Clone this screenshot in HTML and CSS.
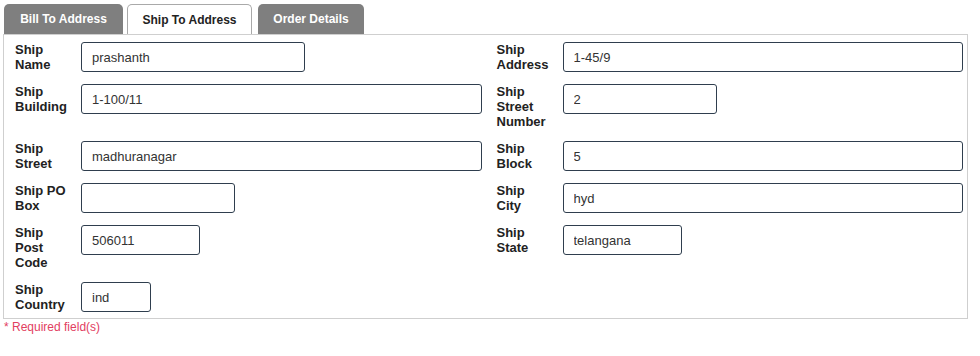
FILE: index.html
```html
<!DOCTYPE html>
<html>
<head>
<meta charset="utf-8">
<link rel="stylesheet" href="styles.css">
</head>
<body>
<div class="wrap">
  <div class="tabs">
    <div class="tab tab-bill">Bill To Address</div>
    <div class="tab tab-ship active">Ship To Address</div>
    <div class="tab tab-order">Order Details</div>
  </div>
  <div class="panel">
    <div class="grid">
      <div class="field"><label class="lbl">Ship Name</label><input class="inp w224" value="prashanth"></div>
      <div class="field"><label class="lbl">Ship Address</label><input class="inp full" value="1-45/9"></div>

      <div class="field"><label class="lbl">Ship Building</label><input class="inp full" value="1-100/11"></div>
      <div class="field"><label class="lbl">Ship Street Number</label><input class="inp w154" value="2"></div>

      <div class="field"><label class="lbl">Ship Street</label><input class="inp full" value="madhuranagar"></div>
      <div class="field"><label class="lbl">Ship Block</label><input class="inp full" value="5"></div>

      <div class="field"><label class="lbl">Ship PO Box</label><input class="inp w154" value=""></div>
      <div class="field"><label class="lbl">Ship City</label><input class="inp full" value="hyd"></div>

      <div class="field"><label class="lbl">Ship Post Code</label><input class="inp w119" value="506011"></div>
      <div class="field"><label class="lbl">Ship State</label><input class="inp w119" value="telangana"></div>

      <div class="field"><label class="lbl">Ship Country</label><input class="inp w70" value="ind"></div>
      <div class="field"></div>
    </div>
  </div>
  <div class="req">* Required field(s)</div>
</div>
</body>
</html>
```
FILE: styles.css
```css
html, body {
  margin: 0;
  padding: 0;
  background: #fff;
}
body {
  font-family: "Liberation Sans", Arial, sans-serif;
  color: #222;
}
.wrap {
  padding: 4px 0 0 3px;
  width: 965px;
}
.tabs {
  display: flex;
  padding-left: 1px;
  height: 30px;
}
.tab {
  box-sizing: border-box;
  height: 30px;
  border-radius: 5px 5px 0 0;
  font-size: 12px;
  font-weight: bold;
  display: flex;
  align-items: center;
  justify-content: center;
  background: #7f7f7f;
  color: #fff;
}
.tab-bill { width: 119px; margin-right: 4px; }
.tab-ship { width: 125px; margin-right: 6px; }
.tab-order { width: 106px; }
.tab.active {
  background: #fff;
  color: #222;
  border: 1px solid #a9a9a9;
  border-bottom: none;
}
.panel {
  border: 1px solid #cfcfcf;
  padding: 7px 0 6px 0;
}
.grid {
  display: grid;
  grid-template-columns: 1fr 1fr;
  row-gap: 12px;
}
.field {
  display: flex;
  align-items: flex-start;
  padding-left: 11px;
  padding-right: 4px;
  min-width: 0;
}
.lbl {
  width: 66px;
  flex: none;
  box-sizing: border-box;
  padding-right: 11px;
  font-size: 13px;
  font-weight: bold;
  line-height: 15px;
  color: #222;
}
.inp {
  box-sizing: border-box;
  height: 30px;
  border: 1px solid #2f3e4e;
  border-radius: 3px;
  padding: 0 10px;
  font-family: "Liberation Sans", Arial, sans-serif;
  font-size: 13px;
  color: #333;
  background: #fff;
  margin: 0;
  outline: none;
}
.full { flex: 1; min-width: 0; }
.w224 { width: 224px; }
.w154 { width: 154px; }
.w119 { width: 119px; }
.w70 { width: 70px; }
.req {
  font-size: 12px;
  color: #e2405f;
  padding-top: 1px;
  padding-left: 1px;
}
```
